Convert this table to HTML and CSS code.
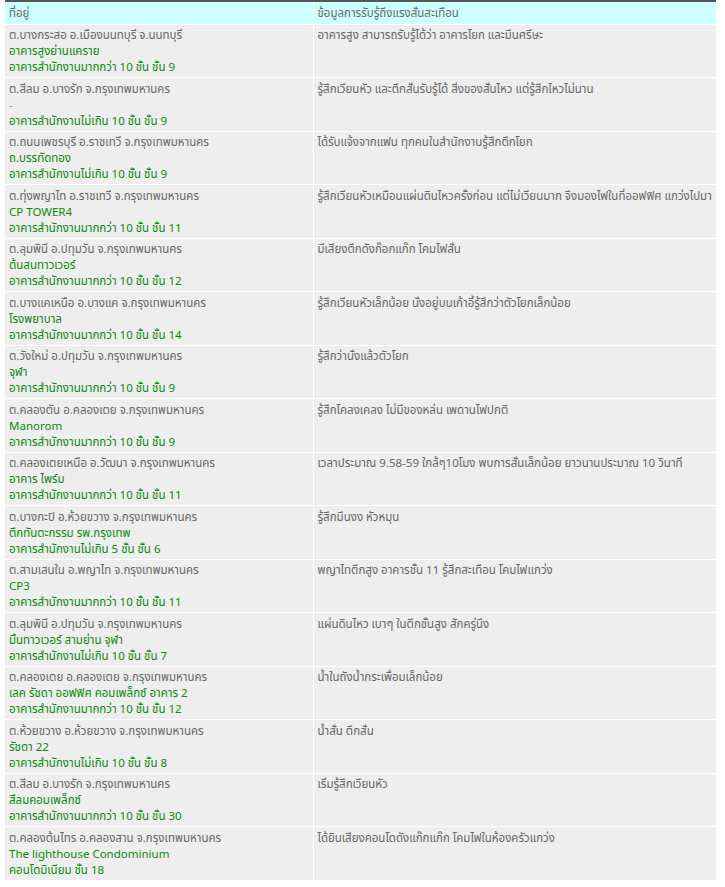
FILE: index.html
```html
<!DOCTYPE html>
<html lang="th">
<head>
<meta charset="utf-8">
<title>รายงานแรงสั่นสะเทือน</title>
<link rel="stylesheet" href="styles.css">
</head>
<body>
<div class="wrap">
<table class="report">
<thead>
<tr><th class="c1">ที่อยู่</th><th class="c2">ข้อมูลการรับรู้ถึงแรงสั่นสะเทือน</th></tr>
</thead>
<tbody>
<tr><td>ต.บางกระสอ อ.เมืองนนทบุรี จ.นนทบุรี<span class="g">อาคารสูงย่านแคราย</span><span class="g">อาคารสำนักงานมากกว่า 10 ชั้น ชั้น 9</span></td><td>อาคารสูง สามารถรับรู้ได้ว่า อาคารโยก และมึนศรีษะ</td></tr>
<tr><td>ต.สีลม อ.บางรัก จ.กรุงเทพมหานคร<span class="g dash">-</span><span class="g">อาคารสำนักงานไม่เกิน 10 ชั้น ชั้น 9</span></td><td>รู้สึกเวียนหัว และตึกสั่นรับรู้ได้ สิ่งของสั่นไหว แต่รู้สึกไหวไม่นาน</td></tr>
<tr><td>ต.ถนนเพชรบุรี อ.ราชเทวี จ.กรุงเทพมหานคร<span class="g">ถ.บรรทัดทอง</span><span class="g">อาคารสำนักงานไม่เกิน 10 ชั้น ชั้น 9</span></td><td>ได้รับแจ้งจากแฟน ทุกคนในสำนักงานรู้สึกตึกโยก</td></tr>
<tr><td>ต.ทุ่งพญาไท อ.ราชเทวี จ.กรุงเทพมหานคร<span class="g">CP TOWER4</span><span class="g">อาคารสำนักงานมากกว่า 10 ชั้น ชั้น 11</span></td><td>รู้สึกเวียนหัวเหมือนแผ่นดินไหวครั้งก่อน แต่ไม่เวียนมาก จึงมองไฟในที่ออฟฟิศ แกว่งไปมา</td></tr>
<tr><td>ต.ลุมพินี อ.ปทุมวัน จ.กรุงเทพมหานคร<span class="g">ต้นสนทาวเวอร์</span><span class="g">อาคารสำนักงานมากกว่า 10 ชั้น ชั้น 12</span></td><td>มีเสียงตึกดังก๊อกแก๊ก โคมไฟสั่น</td></tr>
<tr><td>ต.บางแคเหนือ อ.บางแค จ.กรุงเทพมหานคร<span class="g">โรงพยาบาล</span><span class="g">อาคารสำนักงานมากกว่า 10 ชั้น ชั้น 14</span></td><td>รู้สึกเวียนหัวเล็กน้อย นั่งอยู่บนเก้าอี้รู้สึกว่าตัวโยกเล็กน้อย</td></tr>
<tr><td>ต.วังใหม่ อ.ปทุมวัน จ.กรุงเทพมหานคร<span class="g">จุฬา</span><span class="g">อาคารสำนักงานมากกว่า 10 ชั้น ชั้น 9</span></td><td>รู้สึกว่านั่งแล้วตัวโยก</td></tr>
<tr><td>ต.คลองตัน อ.คลองเตย จ.กรุงเทพมหานคร<span class="g">Manorom</span><span class="g">อาคารสำนักงานมากกว่า 10 ชั้น ชั้น 9</span></td><td>รู้สึกโคลงเคลง ไม่มีของหล่น เพดานไฟปกติ</td></tr>
<tr><td>ต.คลองเตยเหนือ อ.วัฒนา จ.กรุงเทพมหานคร<span class="g">อาคาร ไพร์ม</span><span class="g">อาคารสำนักงานมากกว่า 10 ชั้น ชั้น 11</span></td><td>เวลาประมาณ 9.58-59 ใกล้ๆ10โมง พบการสั่นเล็กน้อย ยาวนานประมาณ 10 วินาที</td></tr>
<tr><td>ต.บางกะปิ อ.ห้วยขวาง จ.กรุงเทพมหานคร<span class="g">ตึกทันตะกรรม รพ.กรุงเทพ</span><span class="g">อาคารสำนักงานไม่เกิน 5 ชั้น ชั้น 6</span></td><td>รู้สึกมึนงง หัวหมุน</td></tr>
<tr><td>ต.สามเสนใน อ.พญาไท จ.กรุงเทพมหานคร<span class="g">CP3</span><span class="g">อาคารสำนักงานมากกว่า 10 ชั้น ชั้น 11</span></td><td>พญาไทตึกสูง อาคารชั้น 11 รู้สึกสะเทือน โคมไฟแกว่ง</td></tr>
<tr><td>ต.ลุมพินี อ.ปทุมวัน จ.กรุงเทพมหานคร<span class="g">มิ้นทาวเวอร์ สามย่าน จุฬา</span><span class="g">อาคารสำนักงานไม่เกิน 10 ชั้น ชั้น 7</span></td><td>แผ่นดินไหว เบาๆ ในตึกชั้นสูง สักครู่นึง</td></tr>
<tr><td>ต.คลองเตย อ.คลองเตย จ.กรุงเทพมหานคร<span class="g">เลค รัชดา ออฟฟิศ คอมเพล็กซ์ อาคาร 2</span><span class="g">อาคารสำนักงานมากกว่า 10 ชั้น ชั้น 12</span></td><td>น้ำในถังน้ำกระเพื่อมเล็กน้อย</td></tr>
<tr><td>ต.ห้วยขวาง อ.ห้วยขวาง จ.กรุงเทพมหานคร<span class="g">รัชดา 22</span><span class="g">อาคารสำนักงานไม่เกิน 10 ชั้น ชั้น 8</span></td><td>น้ำสั่น ตึกสั่น</td></tr>
<tr><td>ต.สีลม อ.บางรัก จ.กรุงเทพมหานคร<span class="g">สีลมคอมเพล็กซ์</span><span class="g">อาคารสำนักงานมากกว่า 10 ชั้น ชั้น 30</span></td><td>เริ่มรู้สึกเวียนหัว</td></tr>
<tr><td>ต.คลองต้นไทร อ.คลองสาน จ.กรุงเทพมหานคร<span class="g">The lighthouse Condominium</span><span class="g">คอนโดมิเนียม ชั้น 18</span></td><td>ได้ยินเสียงคอนโดดังแก๊กแก๊ก โคมไฟในห้องครัวแกว่ง</td></tr>
</tbody>
</table>
</div>
</body>
</html>
```
FILE: styles.css
```css
html, body {
  margin: 0;
  padding: 0;
  background: #ffffff;
}
.wrap {
  padding: 0 5px;
}
.report {
  width: 711px;
  border-collapse: collapse;
  border-top: 2px solid #555555;
  font-family: Tahoma, "Noto Sans Thai", "Noto Sans", "DejaVu Sans", sans-serif;
  font-size: 11.5px;
  line-height: 16px;
  color: #666666;
  table-layout: fixed;
}
.report th {
  background: #ccffff;
  font-weight: normal;
  text-align: left;
  height: 23px;
  padding: 2px 4px 0 4px;
  box-sizing: border-box;
  border-bottom: 1px solid #ffffff;
  color: #6b6b6b;
}
.report th.c1 {
  width: 308px;
}
.report th.c2 {
  border-left: 1px solid #ffffff;
}
.report td {
  background: #eeeeee;
  vertical-align: top;
  padding: 3.5px 4px 1px 4px;
  border-bottom: 1px solid #ffffff;
}
.report td + td {
  border-left: 1px solid #ffffff;
}
.g {
  display: block;
  color: #0a8a0a;
}
.g.dash {
  color: #8a9a8a;
}
```
